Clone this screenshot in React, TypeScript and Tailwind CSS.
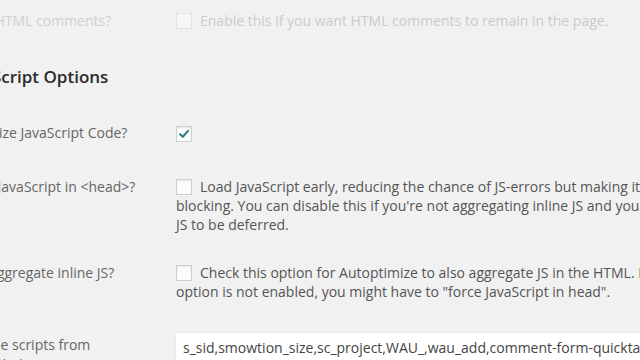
import React from "react";

function Box({ checked = false, faded = false }: { checked?: boolean; faded?: boolean }) {
  return (
    <span
      className={`mr-[8px] inline-flex h-[16px] w-[16px] items-center justify-center border align-[-3px] ${
        faded
          ? "border-[#e2e2e2] bg-[#f6f6f6]"
          : "border-[#cfcfcf] bg-[#fcfcfc] shadow-[inset_0_1px_2px_rgba(0,0,0,0.08)]"
      }`}
    >
      {checked && (
        <svg viewBox="0 0 16 16" className="h-[14px] w-[14px]">
          <path d="M3.5 8.2 L6.6 11.2 L12.6 4.4" fill="none" stroke="#2f7d82" strokeWidth="2.4" strokeLinecap="round" strokeLinejoin="round" />
        </svg>
      )}
    </span>
  );
}

export default function App() {
  return (
    <div className="h-[360px] w-[640px] overflow-hidden bg-[#f1f1f1] font-['Open_Sans',_'Liberation_Sans',_sans-serif] text-[14px] leading-[19px] text-[#555]">
      <div className="-ml-[42px] flex flex-col">
        {/* Keep HTML comments (faded at top) */}
        <div className="mt-[11px] flex h-[19px]">
          <div className="w-[218px] shrink-0 text-[#d0d0d0]">Keep HTML comments?</div>
          <div className="whitespace-nowrap text-[#cbcbcb]">
            <Box faded />
            Enable this if you want HTML comments to remain in the page.
          </div>
        </div>

        {/* Heading */}
        <h2 className="mt-[36px] h-[22px] text-[17px] leading-[22px] font-semibold text-[#2a2a2a]">
          JavaScript Options
        </h2>

        {/* Optimize JS */}
        <div className="mt-[35px] flex h-[19px]">
          <div className="w-[218px] shrink-0 text-[#666]">Optimize JavaScript Code?</div>
          <div>
            <Box checked />
          </div>
        </div>

        {/* Force JS in head */}
        <div className="mt-[35px] flex">
          <div className="w-[218px] shrink-0 text-[#666]">Force JavaScript in &lt;head&gt;?</div>
          <div className="whitespace-nowrap">
            <Box />
            Load JavaScript early, reducing the chance of JS-errors but making it render
            <br />
            blocking. You can disable this if you're not aggregating inline JS and you want outside
            <br />
            JS to be deferred.
          </div>
        </div>

        {/* Aggregate inline JS */}
        <div className="mt-[29px] flex">
          <div className="w-[218px] shrink-0 text-[#666]">Also aggregate inline JS?</div>
          <div className="whitespace-nowrap">
            <Box />
            Check this option for Autoptimize to also aggregate JS in the HTML. If this
            <br />
            option is not enabled, you might have to "force JavaScript in head".
          </div>
        </div>

        {/* Exclude scripts */}
        <div className="mt-[32px] flex">
          <div className="w-[218px] shrink-0 pt-[2px] text-[#666]">
            Exclude scripts from
            <br />
            Autoptimize:
          </div>
          <div className="h-[28px] w-[520px] shrink-0 whitespace-nowrap bg-white pl-[7px] pt-[5px] text-[#444] shadow-[0_0_1px_rgba(0,0,0,0.15)]">
            s_sid,smowtion_size,sc_project,WAU_,wau_add,comment-form-quicktags,edToolbar
          </div>
        </div>
      </div>
    </div>
  );
}
